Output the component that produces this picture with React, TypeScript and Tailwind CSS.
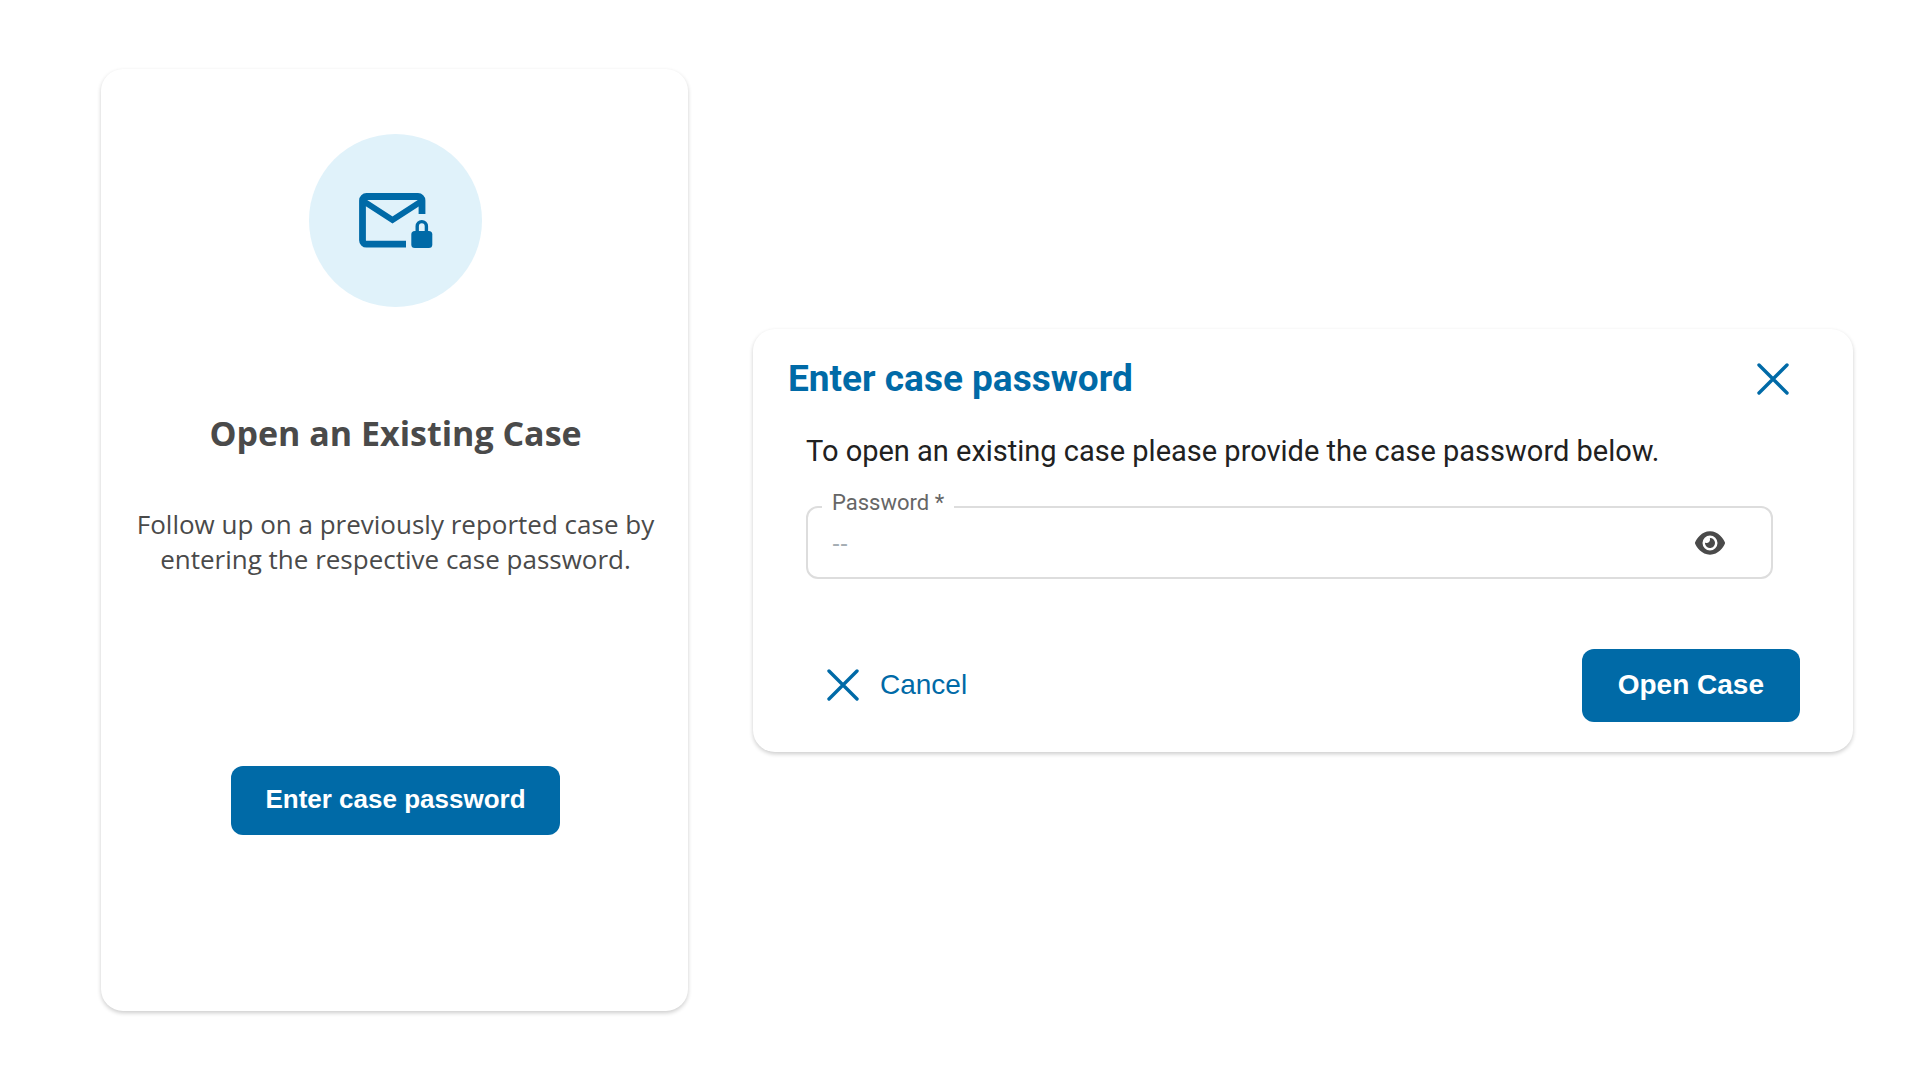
import { useState } from "react";
import type { FormEvent } from "react";
import { FaEye } from "react-icons/fa6";

function MailLockIcon() {
  return (
    <svg viewBox="0 0 74 55" className="w-[74px]" fill="none" aria-hidden="true">
      <path
        d="M47 51.2H7.5a4 4 0 0 1-4-4V7.5a4 4 0 0 1 4-4H59a4 4 0 0 1 4 4V21"
        stroke="currentColor"
        strokeWidth="6.8"
      />
      <path d="M5 8.5 33.5 27 62 8.5" stroke="currentColor" strokeWidth="6" />
      <path
        d="M58.2 40v-6.8a4.6 4.6 0 0 1 9.2 0V40"
        stroke="currentColor"
        strokeWidth="3.4"
      />
      <rect x="52.3" y="38" width="21" height="17" rx="3.5" fill="currentColor" />
    </svg>
  );
}

function CrossIcon() {
  return (
    <svg viewBox="0 0 32 32" className="size-8" fill="none" aria-hidden="true">
      <path
        d="M2 2 30 30M30 2 2 30"
        stroke="currentColor"
        strokeWidth="3.4"
        strokeLinecap="round"
      />
    </svg>
  );
}

function ExistingCaseCard() {
  return (
    <section className="flex w-full max-w-[587px] flex-col items-center rounded-[22px] bg-white pt-[65px] pr-6 pb-44 pl-[26px] text-center font-['Open_Sans',sans-serif] text-[#4a4a4a] shadow-[0_2px_4px_rgba(0,0,0,0.2)]">
      <div className="flex size-[173px] items-center justify-center rounded-full bg-[#e0f2fa] text-[#006aa7]">
        <MailLockIcon />
      </div>
      <h1 className="mt-[102px] text-[34px] leading-[48px] font-bold">
        Open an Existing Case
      </h1>
      <p className="mt-[50px] text-[26px] leading-[35px]">
        Follow up on a previously reported case by entering the respective case
        password.
      </p>
      <button
        type="button"
        className="mt-[189px] h-[69px] rounded-xl bg-[#006aa7] px-[34px] pb-[2px] font-['Liberation_Sans',sans-serif] text-[26px] font-bold text-white"
      >
        Enter case password
      </button>
    </section>
  );
}

function PasswordDialog() {
  const [password, setPassword] = useState("");
  const [visible, setVisible] = useState(false);

  const handleSubmit = (e: FormEvent) => {
    e.preventDefault();
  };

  return (
    <form
      onSubmit={handleSubmit}
      className="min-w-0 flex-1 rounded-[22px] bg-white pt-[26px] pb-[30px] font-['Roboto',sans-serif] shadow-[0_2px_4px_rgba(0,0,0,0.2)]"
    >
      <div className="flex items-center justify-between pr-16 pl-[35px] text-[#006aa7]">
        <h2 className="text-[37px] leading-[48px] font-bold">Enter case password</h2>
        <button type="button" aria-label="Close">
          <CrossIcon />
        </button>
      </div>

      <div className="mt-[26px] pr-20 pl-[53px]">
        <p className="text-[29px] leading-[44px] text-[#212121]">
          To open an existing case please provide the case password below.
        </p>

        <fieldset className="mt-[17px] rounded-xl border-2 border-[#dddddd] pb-[15px] pl-[14px]">
          <legend className="px-[10px] pb-2 text-[22px] leading-[26px] text-[#666666]">
            <label htmlFor="case-password">Password *</label>
          </legend>
          <div className="flex h-[38px] items-center pr-[46px] pl-[10px]">
            <input
              id="case-password"
              type={visible ? "text" : "password"}
              required
              placeholder="--"
              value={password}
              onChange={(e) => setPassword(e.target.value)}
              className="min-w-0 flex-1 font-['Liberation_Sans',sans-serif] text-[24px] leading-9 text-[#212121] outline-none placeholder:text-[#a5adb3]"
            />
            <button
              type="button"
              aria-label="Show password"
              onClick={() => setVisible(!visible)}
              className="text-[#4a4a4a]"
            >
              <FaEye className="size-[30px]" />
            </button>
          </div>
        </fieldset>
      </div>

      <div className="mt-[70px] flex items-center justify-between pr-[53px] pl-[74px] font-['Liberation_Sans',sans-serif] text-[28px]">
        <button type="button" className="flex items-center gap-[21px] text-[#006aa7]">
          <CrossIcon />
          Cancel
        </button>
        <button
          type="submit"
          className="h-[73px] rounded-xl bg-[#006aa7] px-9 font-bold text-white"
        >
          Open Case
        </button>
      </div>
    </form>
  );
}

export default function App() {
  return (
    <main className="flex min-h-screen items-center gap-[65px] bg-white py-16 pr-[67px] pl-[101px]">
      <ExistingCaseCard />
      <PasswordDialog />
    </main>
  );
}
